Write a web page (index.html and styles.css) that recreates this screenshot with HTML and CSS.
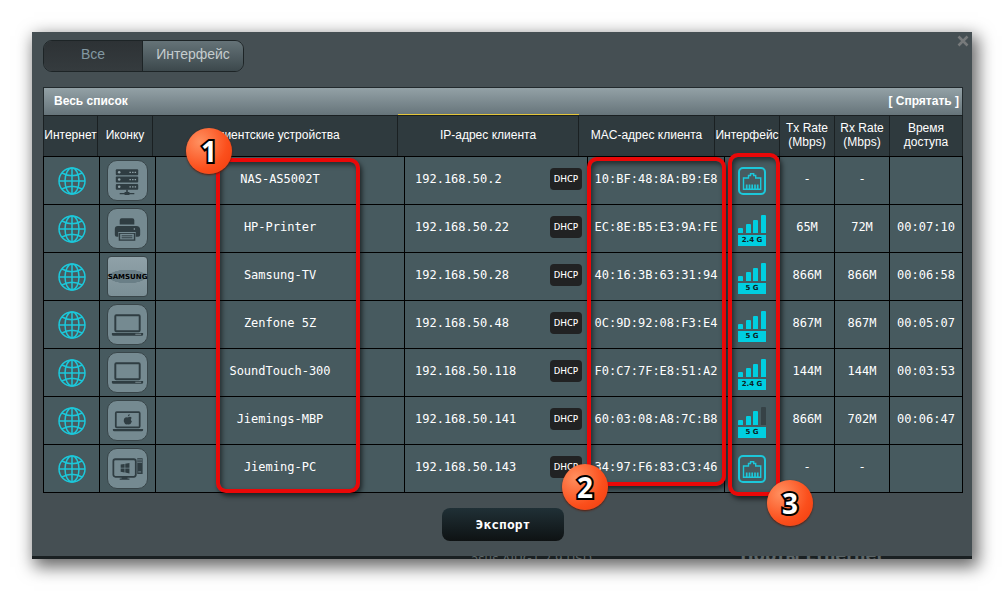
FILE: index.html
```html
<!DOCTYPE html>
<html lang="ru">
<head>
<meta charset="utf-8">
<title>Список клиентов</title>
<link rel="stylesheet" href="styles.css">
</head>
<body>
<svg class="sprite" aria-hidden="true">
  <symbol id="globe" viewBox="0 0 28 28">
    <g fill="none" stroke="#1cc8da" stroke-width="1.5">
      <circle cx="14" cy="14" r="13"/>
      <ellipse cx="14" cy="14" rx="7" ry="13"/>
      <path d="M14 1v26M1 14h26M4 6q10 5.500 20 0M4 22q10-5.500 20 0"/>
    </g>
  </symbol>
  <symbol id="nas" viewBox="0 0 40 40">
    <g fill="#2f3d42">
      <rect x="8" y="8" width="23" height="6" rx="1"/><rect x="8" y="15.500" width="23" height="6" rx="1"/><rect x="8" y="23" width="23" height="6" rx="1"/>
      <path d="M18.700 29h1.600v3h-1.600zM12 32.300h15v1.200h-15zM17 31.300h5v3h-5z"/>
    </g>
    <g fill="#91a3a9"><circle cx="11.500" cy="11" r="1.300"/><circle cx="11.500" cy="18.500" r="1.300"/><circle cx="11.500" cy="26" r="1.300"/>
      <path d="M22 10.500h1.500v1.200H22zM24.700 10.500h1.500v1.200h-1.500zM27.300 10.500h1.500v1.200h-1.500zM22 18h1.500v1.200H22zM24.700 18h1.500v1.200h-1.500zM27.300 18h1.500v1.200h-1.500zM22 25.500h1.500v1.200H22zM24.700 25.500h1.500v1.200h-1.500zM27.300 25.500h1.500v1.200h-1.500z"/>
    </g>
  </symbol>
  <symbol id="printer" viewBox="0 0 40 40">
    <path fill="#2f3d42" d="M12 15.500V11q0-2 2-2h11q2 0 2 2v4.500zM10 17h19q4 0 4 4v5q0 2-2 2h-2.500v-5h-18v5H9q-2 0-2-2v-6q0-3 3-3zM11 24h17v8H11z"/>
    <path fill="#758a91" d="M12.500 25h14v5.700h-14z"/>
    <path stroke="#2f3d42" stroke-width="1" d="M14 27h11M14 29h11"/>
    <circle cx="27" cy="20" r=".8" fill="#91a3a9"/>
  </symbol>
  <symbol id="laptop" viewBox="0 0 40 40">
    <rect x="7.500" y="10" width="25" height="16.500" rx="1" fill="none" stroke="#2f3d42" stroke-width="2"/>
    <path fill="#2f3d42" d="M4 28.300h32v1.500q0 1.200-1.500 1.200h-29Q4 31 4 29.800z"/>
    <path stroke="#91a3a9" stroke-width=".8" d="M28 29.500h6"/>
  </symbol>
  <symbol id="macbook" viewBox="0 0 40 40">
    <rect x="8" y="11" width="24.500" height="15.500" rx="1" fill="none" stroke="#2f3d42" stroke-width="1.800"/>
    <path fill="#2f3d42" d="M5 28.300h31v1q0 1.200-1.500 1.200h-28Q5 30.500 5 29.300zM20.300 15.500q0-2.300 2-2.600.2 2.200-2 2.600zM20.300 16.300q3-1.500 4 .7-1.800 1.500.2 3.500-1.200 3.700-4.200 2.800-3.200.9-4.100-2.700-.5-4.800 4.100-4.300z"/>
  </symbol>
  <symbol id="desktop" viewBox="0 0 40 40">
    <rect x="5.500" y="10" width="23" height="18" rx="2" fill="none" stroke="#2f3d42" stroke-width="1.800"/>
    <path fill="#2f3d42" d="M13 15.500l4-.7v4h-4zM17.700 14.700l4.300-.9v5h-4.300zM13 19.500h4v4l-4-.7zM17.700 19.500H22v5l-4.300-.9zM14 28h6v2h-6zM12 29.700h10v1.300H12zM30 9h5.500v16H30z"/>
    <path stroke="#758a91" stroke-width="1" d="M30 10.700h5M30 13h5"/><path stroke="#758a91" d="M31 23h3"/>
  </symbol>
  <symbol id="wired" viewBox="0 0 28 28">
    <rect x="1" y="1" width="26" height="26" rx="4" fill="none" stroke="#1cc8da" stroke-width="2"/>
    <path fill="none" stroke="#1cc8da" stroke-width="1.400" d="M5.500 22.300V11h5V8.500h2V6.700h3.200v1.800h2V11h5v11.300z"/>
    <path stroke="#1cc8da" stroke-width="1.700" d="M8.700 17.500v4.500M11.500 17.500v4.500M14.200 17.500v4.500M17 17.500v4.500M19.700 17.500v4.500"/>
  </symbol>
  <symbol id="bars4" viewBox="0 0 28 18">
    <path fill="#00cfe1" d="M0 14q0-1 1-1h3q1 0 1 1v4H0zM8 10q0-1 1-1h3q1 0 1 1v8H8zM15 6q0-1 1-1h3q1 0 1 1v12h-5zM23 1q0-1 1-1h3q1 0 1 1v17h-5z"/>
  </symbol>
  <symbol id="bars3" viewBox="0 0 28 18">
    <path fill="#00cfe1" d="M0 14q0-1 1-1h3q1 0 1 1v4H0zM8 10q0-1 1-1h3q1 0 1 1v8H8zM15 5q0-1 1-1h3q1 0 1 1v13h-5z"/>
    <path fill="#364246" d="M23 1q0-1 1-1h3q1 0 1 1v17h-5z"/>
  </symbol>
</svg>

<main class="panel">
  <div class="content">
    <button class="close" type="button" aria-label="Закрыть"><svg width="12" height="12" viewBox="0 0 12 12"><path stroke="#777a7b" stroke-width="2.600" d="M1.500 1.500l9 9M10.500 1.500l-9 9"/></svg></button>
    <div class="switch">
      <button class="seg seg-on" type="button">Все</button>
      <button class="seg" type="button">Интерфейс</button>
    </div>

    <section class="list">
      <div class="list-title"><span>Весь список</span><button class="hide" type="button">[ Спрятать ]</button></div>
      <table class="clients">
        <thead>
          <tr class="head-row"><th>Интернет</th><th>Иконку</th><th>Клиентские устройства</th><th class="sorted">IP-адрес клиента</th><th>MAC-адрес клиента</th><th>Интерфейс</th><th>Tx Rate<br>(Mbps)</th><th>Rx Rate<br>(Mbps)</th><th>Время<br>доступа</th></tr>
        </thead>
        <tbody>
          <tr class="row">
            <td class="icon"><svg class="globe"><use href="#globe"/></svg></td>
            <td class="icon"><span class="device"><svg><use href="#nas"/></svg></span></td>
            <td>NAS-AS5002T</td>
            <td class="ip"><span>192.168.50.2</span><span class="dhcp">DHCP</span></td>
            <td>10:BF:48:8A:B9:E8</td>
            <td class="icon"><svg class="wired"><use href="#wired"/></svg></td>
            <td>-</td><td>-</td><td></td>
          </tr>
          <tr class="row">
            <td class="icon"><svg class="globe"><use href="#globe"/></svg></td>
            <td class="icon"><span class="device"><svg><use href="#printer"/></svg></span></td>
            <td>HP-Printer</td>
            <td class="ip"><span>192.168.50.22</span><span class="dhcp">DHCP</span></td>
            <td>EC:8E:B5:E3:9A:FE</td>
            <td class="radio"><svg class="bars"><use href="#bars4"/></svg><span class="band">2.4 G</span></td>
            <td>65M</td><td>72M</td><td>00:07:10</td>
          </tr>
          <tr class="row">
            <td class="icon"><svg class="globe"><use href="#globe"/></svg></td>
            <td class="icon"><span class="device brand"><span class="brand-name">SAMSUNG</span></span></td>
            <td>Samsung-TV</td>
            <td class="ip"><span>192.168.50.28</span><span class="dhcp">DHCP</span></td>
            <td>40:16:3B:63:31:94</td>
            <td class="radio"><svg class="bars"><use href="#bars4"/></svg><span class="band">5 G</span></td>
            <td>866M</td><td>866M</td><td>00:06:58</td>
          </tr>
          <tr class="row">
            <td class="icon"><svg class="globe"><use href="#globe"/></svg></td>
            <td class="icon"><span class="device"><svg><use href="#laptop"/></svg></span></td>
            <td>Zenfone 5Z</td>
            <td class="ip"><span>192.168.50.48</span><span class="dhcp">DHCP</span></td>
            <td>0C:9D:92:08:F3:E4</td>
            <td class="radio"><svg class="bars"><use href="#bars4"/></svg><span class="band">5 G</span></td>
            <td>867M</td><td>867M</td><td>00:05:07</td>
          </tr>
          <tr class="row">
            <td class="icon"><svg class="globe"><use href="#globe"/></svg></td>
            <td class="icon"><span class="device"><svg><use href="#laptop"/></svg></span></td>
            <td>SoundTouch-300</td>
            <td class="ip"><span>192.168.50.118</span><span class="dhcp">DHCP</span></td>
            <td>F0:C7:7F:E8:51:A2</td>
            <td class="radio"><svg class="bars"><use href="#bars4"/></svg><span class="band">2.4 G</span></td>
            <td>144M</td><td>144M</td><td>00:03:53</td>
          </tr>
          <tr class="row">
            <td class="icon"><svg class="globe"><use href="#globe"/></svg></td>
            <td class="icon"><span class="device"><svg><use href="#macbook"/></svg></span></td>
            <td>Jiemings-MBP</td>
            <td class="ip"><span>192.168.50.141</span><span class="dhcp">DHCP</span></td>
            <td>60:03:08:A8:7C:B8</td>
            <td class="radio"><svg class="bars"><use href="#bars3"/></svg><span class="band">5 G</span></td>
            <td>866M</td><td>702M</td><td>00:06:47</td>
          </tr>
          <tr class="row">
            <td class="icon"><svg class="globe"><use href="#globe"/></svg></td>
            <td class="icon"><span class="device"><svg><use href="#desktop"/></svg></span></td>
            <td>Jieming-PC</td>
            <td class="ip"><span>192.168.50.143</span><span class="dhcp">DHCP</span></td>
            <td>34:97:F6:83:C3:46</td>
            <td class="icon"><svg class="wired"><use href="#wired"/></svg></td>
            <td>-</td><td>-</td><td></td>
          </tr>
        </tbody>
      </table>
      <div class="marks">
        <div class="mark mark-names"><span class="ball">1</span></div>
        <div class="mark mark-mac"><span class="ball">2</span></div>
        <div class="mark mark-iface"><span class="ball">3</span></div>
      </div>
    </section>
    <button class="export" type="button">Экспорт</button>
  </div>
  <div class="behind"><span class="behind-usb">asus AJUG1 2.9 USD</span><span class="behind-ports">Порты Ethernet</span></div>
</main>
</body>
</html>
```
FILE: styles.css
```css
* { box-sizing: border-box; }

body {
  margin: 0;
  padding: 32px;
  background: #fff;
  font-family: "Liberation Sans", Arial, sans-serif;
  font-size: 12px;
  color: #fff;
}

button {
  padding: 0;
  border: 0;
  background: none;
  color: inherit;
  font: inherit;
  cursor: pointer;
}

svg { display: block; }
.sprite { position: absolute; width: 0; height: 0; }

.panel { box-shadow: 4px 6px 16px 2px rgba(0, 0, 0, .6); }

.content {
  position: relative;
  display: flex;
  flex-direction: column;
  padding: 8px 9px 15px 11px;
  background: #454f53;
}

.close { position: absolute; top: 3px; right: 3px; }

.switch {
  display: flex;
  align-self: flex-start;
  margin-bottom: 15px;
  border: 1px solid #1d2426;
  border-radius: 9px;
  overflow: hidden;
}

.seg {
  width: 100px;
  height: 30px;
  padding-bottom: 4px;
  background: linear-gradient(#657378, #3c484c);
  color: #c5ccce;
  font-size: 14px;
}

.seg-on {
  width: 99px;
  border-right: 1px solid #1d2426;
  background: linear-gradient(#2d3235, #353b3e);
  color: #8298a2;
}

.list { position: relative; }

.list-title {
  display: flex;
  justify-content: space-between;
  align-items: center;
  height: 28px;
  padding: 0 3px 2px 10px;
  border: 1px solid #222a2d;
  border-bottom: 0;
  background: linear-gradient(#93a1a6, #66747a);
  font-weight: bold;
}

.clients { display: block; }
.clients thead, .clients tbody { display: block; }

.head-row, .row, .marks { display: grid; }

.head-row {
  grid-template-columns: 54fr 55fr 245fr 181fr 136fr 65fr 55fr 55fr 73fr;
  height: 41px;
  border-left: 1px solid #1a2022;
  background: #2f3a3e;
}

th {
  display: flex;
  align-items: center;
  justify-content: center;
  min-width: 0;
  padding: 0 0 2px;
  border-top: 1px solid #1a2022;
  border-right: 1px solid #1a2022;
  font-weight: normal;
  line-height: 14px;
  text-align: center;
  white-space: nowrap;
}

th.sorted { box-shadow: 0 -1px #e3c53a; }

.clients tbody { border-bottom: 1px solid #000; }

.row, .marks {
  grid-template-columns: 56fr 56fr 249fr 183fr 137fr 55fr 55fr 55fr 73fr;
}

.row {
  height: 48px;
  border-top: 1px solid #000;
  border-left: 1px solid #000;
  background: #475a5f;
  font-family: "DejaVu Sans Mono", "Liberation Mono", monospace;
}

td {
  display: flex;
  align-items: center;
  justify-content: center;
  min-width: 0;
  padding: 0 0 4px;
  border-right: 1px solid #000;
}

td.icon { padding: 0; }
td.ip { justify-content: space-between; padding: 0 5px 4px 10px; }

.dhcp {
  width: 32px;
  height: 22px;
  border-radius: 4px;
  background: #212223;
  font: 500 9px/22px "Noto Sans", sans-serif;
  text-align: center;
}

.globe, .wired { width: 28px; height: 28px; }

.device {
  display: flex;
  align-items: center;
  justify-content: center;
  width: 41px;
  height: 41px;
  border: 1px solid #39464a;
  border-radius: 10px;
  background: #758a91;
}

.device svg { width: 40px; height: 40px; }

.brand {
  border-radius: 4px;
  background: radial-gradient(19px 7px, #6a7f87 95%, transparent), linear-gradient(#8fa1a8, #7c9097);
}

.brand-name {
  color: #000;
  font: bold 7px "DejaVu Sans", sans-serif;
}

td.radio { flex-direction: column; gap: 2px; padding: 4px 0 0; }
.bars { width: 28px; height: 18px; }

.band {
  width: 28px;
  height: 11px;
  background: #00cfe1;
  color: #0d2023;
  font: bold 7px/11px "DejaVu Sans", sans-serif;
  text-align: center;
}

.marks {
  position: absolute;
  top: 69px;
  right: 0;
  bottom: 0;
  left: 0;
  padding-left: 1px;
  pointer-events: none;
}

.mark {
  position: relative;
  grid-row: 1;
  border: 4px solid #ea0808;
  border-radius: 10px;
  box-shadow: 2px 3px 5px rgba(0, 0, 0, .6), inset 2px 3px 5px rgba(0, 0, 0, .5);
}

.mark-names { grid-column: 3; margin: 2px 45px 0 60px; }
.mark-mac { grid-column: 5; margin: 1px -1px 7px; }
.mark-iface { grid-column: 6; margin: -3px 0 -3px 3px; }

.ball {
  position: absolute;
  width: 46px;
  height: 46px;
  border-radius: 50%;
  background: radial-gradient(circle at 30% 30%, #ff9060, #fb4f1c 60%, #f03a0c);
  box-shadow: 0 1px 2px #5a1c0c;
  font: bold 28px/46px "Noto Sans", sans-serif;
  text-align: center;
  -webkit-text-stroke: 4px #000;
  paint-order: stroke fill;
}

.mark-names .ball { top: -34px; left: -34px; }
.mark-mac .ball { bottom: -28px; left: -29px; }
.mark-iface .ball { right: -37px; bottom: -34px; }

.export {
  align-self: center;
  width: 122px;
  height: 33px;
  margin-top: 15px;
  border-radius: 8px;
  background: linear-gradient(#203036, #0e1213);
  font: bold 13px "DejaVu Sans Mono", monospace;
}

.behind {
  display: flex;
  justify-content: space-between;
  height: 3px;
  padding: 0 88px 0 439px;
  overflow: hidden;
  background: #1a2022;
  color: #5b6466;
}

.behind-usb { font: 12px/6px "DejaVu Sans", sans-serif; }
.behind-ports { font: bold 16px/0 "DejaVu Sans", sans-serif; }
```
